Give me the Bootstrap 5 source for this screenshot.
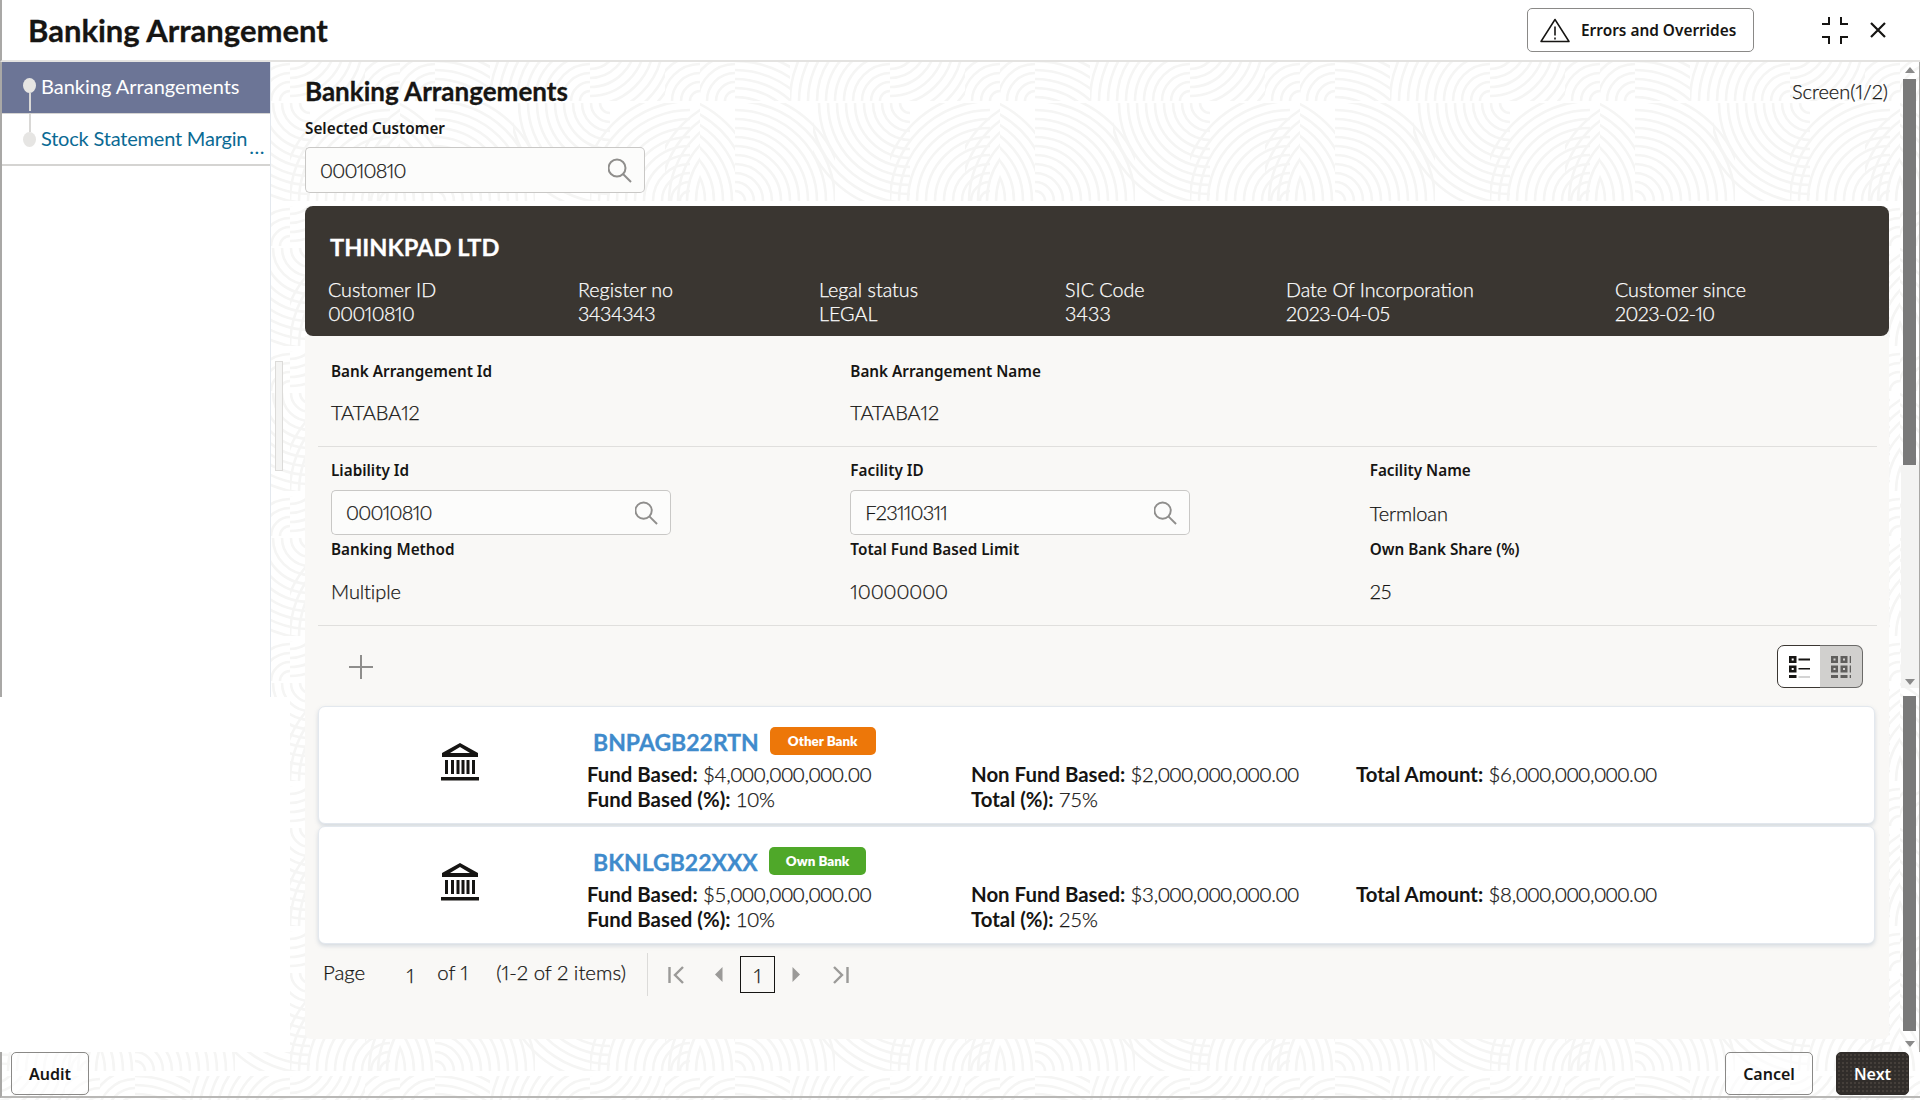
<!doctype html>
<html lang="en">
<head>
<meta charset="utf-8">
<title>Banking Arrangement</title>
<link href="https://cdn.jsdelivr.net/npm/bootstrap@5.3.0/dist/css/bootstrap.min.css" rel="stylesheet">
<style>
html,body{height:1100px;overflow:hidden}
body{font-family:"Lato","Liberation Sans",sans-serif;color:#161513;background-color:#fff;background-position:100px 61px;
background-image:url("data:image/svg+xml;utf8,<svg xmlns='http://www.w3.org/2000/svg' xmlns:xlink='http://www.w3.org/1999/xlink' width='300' height='145'><defs><g id='r' fill='none' stroke='%23f5f5f4' stroke-width='2.6'><circle r='10'/><circle r='19'/><circle r='28'/><circle r='37'/><circle r='46'/><circle r='55'/><circle r='64'/><circle r='73'/><circle r='82'/><circle r='91'/><circle r='100'/><circle r='109'/></g></defs><svg width='35' height='40'><use xlink:href='%23r' x='35' y='40'/></svg><svg x='35' width='55' height='40'><use xlink:href='%23r' x='0' y='100'/></svg><svg x='90' width='100' height='40'><use xlink:href='%23r' x='100' y='40'/></svg><svg x='190' width='75' height='40'><use xlink:href='%23r' x='0' y='-20'/></svg><svg x='265' width='35' height='40'><use xlink:href='%23r' x='35' y='40'/></svg><svg y='42' width='35' height='98'><use xlink:href='%23r' x='-50' y='98'/></svg><svg x='35' y='42' width='100' height='98'><use xlink:href='%23r' x='0' y='98'/></svg><svg x='113' y='42' width='97' height='98'><use xlink:href='%23r' x='97' y='0'/></svg><svg x='190' y='42' width='100' height='98'><use xlink:href='%23r' x='100' y='98'/></svg><svg x='265' y='42' width='35' height='98'><use xlink:href='%23r' x='95' y='98'/></svg></svg>")}
.thin-text{font-weight:300;-webkit-text-stroke:.25px currentColor;font-variant-numeric:proportional-nums}
.heavy-text{-webkit-text-stroke:.3px currentColor}
.digit-tight{letter-spacing:-.5px}
.digit-tighter{letter-spacing:-.75px}
.top-bar{height:62px;background:#fff;border-bottom:2px solid #e4e3e1;border-left:2px solid #a9a8a6;padding:0 34px 0 26px}
.top-title{font-size:31px;font-weight:700;line-height:1;margin:0}
.err-btn{width:227px;height:44px;padding:0 0 0 12px;gap:11px;font-family:"Noto Sans",sans-serif;font-size:15.4px;font-weight:600;line-height:26px;color:#161513;background:#fff;border:1px solid #8a8987;border-radius:5px}
.err-label{padding-top:2px}
.top-tools{gap:22px;margin-left:68px}
.mid-row{height:990px}
.left-rail{width:290px;flex:none}
.left-top{height:635px}
.step-list{width:271px;background:#fff;border-left:2px solid #a9a8a6;border-right:1px solid #e3e8ee}
.step-item{height:52px;border-bottom:2px solid #d5d4d2;padding-left:21px;gap:5px;font-size:20px;line-height:1;white-space:nowrap}
.step-on{background:#6c7596;color:#fff;border-bottom:1px solid #d5d4d2}
.step-off{color:#0a6a94}
.step-off .step-label{letter-spacing:-.2px}
.step-label{padding-top:14px}
.step-dot{width:13px;height:15px;border-radius:50%;background:#e6e5e3;flex:none}
.step-line{width:2px;background:#d9d8d6;flex:none;height:18px}
.step-wrap{width:13px;flex:none}
.step-more{font-size:20px;line-height:1;margin:22px 0 0 -3px;letter-spacing:.5px}
.drag-handle{width:8px;height:110px;margin:299px 0 0 4px;background:#f4f4f3;border:1px solid #dcdbd9}
.left-low{height:355px;background:#fff}
.center-col{padding:14px 12px 0 15px;min-width:0}
.page-head{height:30px;line-height:30px}
.page-h{font-size:26px;font-weight:700;line-height:30px;margin:0}
.screen-no{font-size:20px;margin-right:1px}
.field-tag{font-family:"Noto Sans",sans-serif;font-size:15.3px;font-weight:600;line-height:20px;color:#161513;margin:0}
.lookup{width:340px;height:46px;margin-top:9px}
.lookup .form-control{height:100%;font-size:20px;font-weight:300;letter-spacing:-.75px;-webkit-text-stroke:.25px currentColor;font-variant-numeric:proportional-nums;color:#161513;background:#fcfcfb;border:1px solid #c9c8c6;border-right:0;border-radius:5px 0 0 5px;padding:0 0 0 14px;box-shadow:none}
.lookup .input-group-text{background:#fcfcfb;border:1px solid #c9c8c6;border-left:0;border-radius:0 5px 5px 0;padding:0 12px 0 0}
.info-panel .lookup .form-control{padding-bottom:2px}
.cust-strip{height:130px;margin-top:13px;background:#3a3631;color:#fff;border-radius:8px;padding:0 0 0 23px}
.cust-name{font-size:23.6px;font-weight:700;line-height:30px;margin:0;padding:26px 0 0 2px}
.cust-grid{display:grid;grid-template-columns:250px 241px 246px 221px 329px 1fr;margin-top:16px;font-size:19.7px;line-height:24px}
.info-panel{height:703px;background:#f9f8f6;border-radius:0 0 6px 6px;padding:25px 24px 0 26px}
.val-text{font-size:20px;line-height:24px;margin:19px 0 0;letter-spacing:-.1px}
.val-low{margin-top:20px}
.val-mid{margin-top:21px}
.rule-line{height:1px;background:#e0dfdd;margin:22px -12px 0 -13px}
.info-panel .lookup{width:340px;height:45px;margin-top:10px}
.gap-top{margin-top:13px}
.gap-row{margin-top:4px}
.tool-row{margin:19px 2px 0 -13px;height:43px}
.add-mark{margin-left:31px}
.view-pair{width:86px;height:43px}
.view-pair .btn{flex:1;padding:0;border-radius:7px;display:flex;align-items:center;justify-content:center}
.view-a{background:#fff;border:1.5px solid #3a3631}
.view-b{background:#d1d0ce;border:1.5px solid #6b6a68;border-left:0}
.bank-card{height:118px;margin:2px -10px 0 -13px;border:1px solid #e3e8ee;border-radius:7px;background:#fff;box-shadow:0 2px 4px rgba(120,140,165,.28)}
.bank-card.first-card{margin-top:18px}
.bank-sign{width:268px;padding:36px 0 0 14px;flex:none}
.bank-text{padding-top:19px;min-width:0}
.bank-code{font-size:23px;font-weight:700;line-height:28px;color:#3f8bcc;margin:2px 11px 0 6px}
.bank-tag{height:28px;border-radius:5px;color:#fff;font-size:13.4px;font-weight:800;padding:0 18px;display:flex;align-items:center}
.tag-other{background:#ed7709}
.tag-own{background:#4fa829;padding:0 17px}
.bank-nums{display:grid;grid-template-columns:384px 385px 1fr;margin-top:6px;font-size:20.4px;line-height:25px}
.bank-nums span{font-weight:300;letter-spacing:-.2px;-webkit-text-stroke:.25px currentColor}
.bank-nums b{font-weight:700}
.pager-row{margin:12px 0 0 -8px;height:37px;font-size:20.4px}
.pg-lift{margin-top:-4px}
.pg-one{width:36px;text-align:center;margin:0 0 0 27px;font-size:20px}
.pg-of{margin-left:9px}
.pg-cnt{margin-left:28px}
.pg-sep{width:1px;height:43px;background:#dcdbd9;margin-left:21px}
.pg-first{margin-left:20px}
.pg-prev{margin-left:30px}
.pg-box{width:35px;height:37px;margin-left:17px;border:1px solid #161513;display:flex;align-items:center;justify-content:center;font-size:20px}
.pg-next{margin-left:17px}
.pg-last{margin-left:32px}
.bar-rail{width:19px;flex:none;background:transparent;border-right:1px solid #a9a8a6}
.bar-arrow{height:17px;display:flex;align-items:center;justify-content:center;padding-right:1px}
.bar-thumb{width:13px;margin-left:2px;background:#7a7a7a}
.thumb-a{height:388px}
.thumb-b{height:337px}
.bar-track{height:224px;background:#f3f3f2;display:flex;align-items:flex-end;justify-content:center;padding:0 1px 3px 0}
.foot-bar{height:46px;border-bottom:2px solid #b9b8b6;border-left:2px solid #a9a8a6;padding:0 11px 0 9px}
.foot-btn{height:43px;font-size:16px;font-weight:600;font-family:"Noto Sans",sans-serif;color:#161513;background:rgba(255,255,255,.6);border:1px solid #8a8987;border-radius:5px;padding:0;display:flex;align-items:center;justify-content:center}
.foot-audit{width:78px}
.foot-cancel{width:88px}
.foot-next{width:73px;margin-left:23px;color:#fff;background-color:#312d2a;background-image:radial-gradient(#453f3a 1px,transparent 1px);background-size:4px 4px;border-color:#312d2a}
</style>
</head>
<body class="d-flex flex-column">
<header class="top-bar d-flex align-items-center justify-content-between">
  <h1 class="top-title heavy-text">Banking Arrangement</h1>
  <div class="d-flex align-items-center">
    <button type="button" class="btn err-btn d-flex align-items-center">
      <svg width="30" height="25" viewBox="0 0 30 25" fill="none" stroke="#161513" stroke-width="1.5" stroke-linejoin="round"><path d="M15 1.500 29 23.500H1Z"/><path d="M15 8.500v9M15 19.500v2" stroke-width="1.6"/></svg>
      <span class="err-label">Errors and Overrides</span>
    </button>
    <div class="top-tools d-flex align-items-center">
      <svg width="26" height="27" viewBox="0 0 26 27" fill="none" stroke="#161513" stroke-width="2"><path d="M0 7H7V0M19 0V7H26M0 20H7V27M19 27V20H26"/></svg>
      <svg width="16" height="16" viewBox="0 0 16 16" fill="none" stroke="#161513" stroke-width="2.2"><path d="M1 1 15 15M15 1 1 15"/></svg>
    </div>
  </div>
</header>

<div class="mid-row d-flex">
  <aside class="left-rail d-flex flex-column">
    <div class="left-top d-flex">
      <nav class="step-list">
        <div class="step-item step-on d-flex">
          <div class="step-wrap d-flex flex-column align-items-center pt-3"><span class="step-dot"></span><span class="step-line"></span></div>
          <span class="step-label">Banking Arrangements</span>
        </div>
        <div class="step-item step-off d-flex">
          <div class="step-wrap d-flex flex-column align-items-center"><span class="step-line"></span><span class="step-dot"></span></div>
          <span class="step-label">Stock Statement Margin</span><span class="step-more">...</span>
        </div>
      </nav>
      <div class="drag-handle"></div>
    </div>
    <div class="left-low"></div>
  </aside>

  <main class="center-col flex-grow-1">
    <div class="page-head d-flex justify-content-between">
      <h2 class="page-h heavy-text">Banking Arrangements</h2>
      <span class="screen-no thin-text">Screen(1/2)</span>
    </div>
    <label class="field-tag d-block mt-2 pt-1">Selected Customer</label>
    <div class="input-group lookup">
      <input class="form-control" value="00010810" aria-label="Selected Customer">
      <span class="input-group-text"><svg width="25" height="25" viewBox="0 0 25 25" fill="none" stroke="#8f8e8c" stroke-width="2"><circle cx="10" cy="10" r="8.500"/><path d="M16 16 24 24"/></svg></span>
    </div>
    <section class="cust-strip">
      <h3 class="cust-name heavy-text">THINKPAD LTD</h3>
      <div class="cust-grid thin-text">
        <div>Customer ID<br><span class="digit-tight">00010810</span></div>
        <div>Register no<br><span class="digit-tight">3434343</span></div>
        <div>Legal status<br>LEGAL</div>
        <div>SIC Code<br>3433</div>
        <div>Date Of Incorporation<br><span class="digit-tight">2023-04-05</span></div>
        <div>Customer since<br><span class="digit-tight">2023-02-10</span></div>
      </div>
    </section>
    <section class="info-panel">
      <div class="row">
        <div class="col-4"><p class="field-tag">Bank Arrangement Id</p><p class="val-text thin-text digit-tight">TATABA12</p></div>
        <div class="col-4"><p class="field-tag">Bank Arrangement Name</p><p class="val-text thin-text digit-tight">TATABA12</p></div>
      </div>
      <div class="rule-line"></div>
      <div class="row gap-top">
        <div class="col-4"><p class="field-tag">Liability Id</p>
          <div class="input-group lookup"><input class="form-control" value="00010810" aria-label="Liability Id"><span class="input-group-text"><svg width="24" height="24" viewBox="0 0 25 25" fill="none" stroke="#8f8e8c" stroke-width="2"><circle cx="10" cy="10" r="8.500"/><path d="M16 16 24 24"/></svg></span></div>
        </div>
        <div class="col-4"><p class="field-tag">Facility ID</p>
          <div class="input-group lookup"><input class="form-control" value="F23110311" aria-label="Facility ID"><span class="input-group-text"><svg width="24" height="24" viewBox="0 0 25 25" fill="none" stroke="#8f8e8c" stroke-width="2"><circle cx="10" cy="10" r="8.500"/><path d="M16 16 24 24"/></svg></span></div>
        </div>
        <div class="col-4"><p class="field-tag">Facility Name</p><p class="val-text val-mid thin-text">Termloan</p></div>
      </div>
      <div class="row gap-row">
        <div class="col-4"><p class="field-tag">Banking Method</p><p class="val-text val-low thin-text">Multiple</p></div>
        <div class="col-4"><p class="field-tag">Total Fund Based Limit</p><p class="val-text val-low thin-text digit-tighter">10000000</p></div>
        <div class="col-4"><p class="field-tag">Own Bank Share (%)</p><p class="val-text val-low thin-text">25</p></div>
      </div>
      <div class="rule-line"></div>
      <div class="tool-row d-flex align-items-center justify-content-between">
        <svg class="add-mark" width="24" height="24" viewBox="0 0 24 24" stroke="#8f8e8c" stroke-width="2"><path d="M12 0V24M0 12H24"/></svg>
        <div class="btn-group view-pair">
          <button type="button" class="btn view-a" aria-label="List view"><svg width="21" height="22" viewBox="0 0 21 22"><g fill="#161513"><rect width="7.500" height="7"/><rect y="9.500" width="7.500" height="7"/><rect y="19" width="7.500" height="3"/><rect x="9.500" y="2.500" width="11.500" height="2"/><rect x="9.500" y="12" width="11.500" height="1.500"/></g><rect x="9.500" y="20.500" width="11.500" height="1" fill="#aaa"/><g fill="#fff"><rect x="2.700" y="2.500" width="2" height="2"/><rect x="2.700" y="12" width="2" height="2"/></g></svg></button>
          <button type="button" class="btn view-b" aria-label="Grid view"><svg width="20" height="22" viewBox="0 0 20 22"><g fill="#5f5e5c"><rect width="7" height="7"/><rect x="9.500" width="7" height="7"/><rect x="18.700" width="1.300" height="7"/><rect y="9.500" width="7" height="7"/><rect x="9.500" y="9.500" width="7" height="7"/><rect x="18.700" y="9.500" width="1.300" height="7"/><rect y="19" width="7" height="3"/><rect x="9.500" y="19" width="7" height="3"/><rect x="18.700" y="19" width="1.300" height="3"/></g><g fill="#d1d0ce"><rect x="2.500" y="2.500" width="2" height="2"/><rect x="12" y="2.500" width="2" height="2"/><rect x="2.500" y="12" width="2" height="2"/><rect x="12" y="12" width="2" height="2"/></g></svg></button>
        </div>
      </div>

      <article class="bank-card first-card d-flex">
        <div class="bank-sign d-flex justify-content-center"><svg width="38" height="38" viewBox="0 0 38 38"><path fill="#161513" fill-rule="evenodd" d="M19 0 37 10V14H1V10ZM19 4 9 10H29Z"/><path fill="#161513" d="M4 17h3v14H4zM10 17h3v14h-3zM15.500 17h3v14h-3zM20.500 17h3v14h-3zM25.500 17h3v14h-3zM31 17h3v14h-3zM0 34h38v3.500H0z"/></svg></div>
        <div class="bank-text flex-grow-1">
          <div class="d-flex align-items-center"><span class="bank-code heavy-text">BNPAGB22RTN</span><span class="bank-tag tag-other">Other Bank</span></div>
          <div class="bank-nums">
            <div><b>Fund Based:</b> <span>$4,000,000,000.00</span></div>
            <div><b>Non Fund Based:</b> <span>$2,000,000,000.00</span></div>
            <div><b>Total Amount:</b> <span>$6,000,000,000.00</span></div>
            <div><b>Fund Based (%):</b> <span>10%</span></div>
            <div><b>Total (%):</b> <span>75%</span></div>
          </div>
        </div>
      </article>
      <article class="bank-card d-flex">
        <div class="bank-sign d-flex justify-content-center"><svg width="38" height="38" viewBox="0 0 38 38"><path fill="#161513" fill-rule="evenodd" d="M19 0 37 10V14H1V10ZM19 4 9 10H29Z"/><path fill="#161513" d="M4 17h3v14H4zM10 17h3v14h-3zM15.500 17h3v14h-3zM20.500 17h3v14h-3zM25.500 17h3v14h-3zM31 17h3v14h-3zM0 34h38v3.500H0z"/></svg></div>
        <div class="bank-text flex-grow-1">
          <div class="d-flex align-items-center"><span class="bank-code heavy-text">BKNLGB22XXX</span><span class="bank-tag tag-own">Own Bank</span></div>
          <div class="bank-nums">
            <div><b>Fund Based:</b> <span>$5,000,000,000.00</span></div>
            <div><b>Non Fund Based:</b> <span>$3,000,000,000.00</span></div>
            <div><b>Total Amount:</b> <span>$8,000,000,000.00</span></div>
            <div><b>Fund Based (%):</b> <span>10%</span></div>
            <div><b>Total (%):</b> <span>25%</span></div>
          </div>
        </div>
      </article>

      <div class="pager-row d-flex align-items-center thin-text">
        <span class="pg-lift">Page</span><span class="pg-one">1</span><span class="pg-of pg-lift">of 1</span><span class="pg-cnt pg-lift">(1-2 of 2 items)</span><span class="pg-sep"></span>
        <svg class="pg-first" width="16" height="18" viewBox="0 0 16 18" fill="none" stroke="#9b9a98" stroke-width="2.4"><path d="M1.500 1V17M15 1 7 9 15 17"/></svg>
        <svg class="pg-prev" width="9" height="15" viewBox="0 0 9 15" fill="#9b9a98"><path d="M8.500 0V15L1 7.500Z"/></svg>
        <span class="pg-box">1</span>
        <svg class="pg-next" width="9" height="15" viewBox="0 0 9 15" fill="#9b9a98"><path d="M.5 0V15L8 7.500Z"/></svg>
        <svg class="pg-last" width="16" height="18" viewBox="0 0 16 18" fill="none" stroke="#9b9a98" stroke-width="2.4"><path d="M14.500 1V17M1 1 9 9 1 17"/></svg>
      </div>
    </section>
  </main>

  <div class="bar-rail d-flex flex-column">
    <div class="bar-arrow"><svg width="10" height="6" viewBox="0 0 10 6" fill="#8a8a8a"><path d="M5 0 10 6H0Z"/></svg></div>
    <div class="bar-thumb thumb-a"></div>
    <div class="bar-track"><svg width="10" height="6" viewBox="0 0 10 6" fill="#8a8a8a"><path d="M5 6 10 0H0Z"/></svg></div>
    <div class="bar-thumb thumb-b mt-2"></div>
    <div class="bar-arrow mt-1"><svg width="10" height="6" viewBox="0 0 10 6" fill="#8a8a8a"><path d="M5 6 10 0H0Z"/></svg></div>
  </div>
</div>

<footer class="foot-bar d-flex align-items-start justify-content-between">
  <button type="button" class="btn foot-btn foot-audit">Audit</button>
  <div class="d-flex">
    <button type="button" class="btn foot-btn foot-cancel">Cancel</button>
    <button type="button" class="btn foot-btn foot-next">Next</button>
  </div>
</footer>
<script src="https://cdn.jsdelivr.net/npm/bootstrap@5.3.0/dist/js/bootstrap.bundle.min.js"></script>
</body>
</html>
